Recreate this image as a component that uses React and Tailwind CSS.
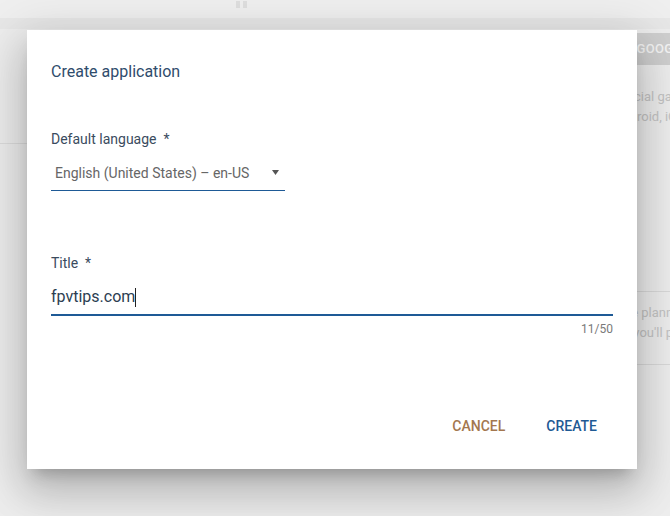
import React from "react";

export default function App() {
  return (
    <div className="relative w-[670px] h-[516px] overflow-hidden bg-[#ededed] font-['Roboto',sans-serif]">
      {/* dimmed page behind */}
      <div className="flex flex-col w-full h-full">
        <div className="h-[18px] bg-[#efefef] flex">
          <div className="ml-[236px] mt-[1px] flex gap-[3px]">
            <div className="w-[4px] h-[7px] bg-[#dedede]" />
            <div className="w-[4px] h-[7px] bg-[#dedede]" />
          </div>
        </div>
        <div className="h-[11px] bg-[#e7e7e7]" />
        <div className="flex flex-1">
          <div className="w-[470px] shrink-0 flex flex-col">
            <div className="h-[114px]" />
            <div className="h-px bg-[#dcdcdc]" />
          </div>
          <div className="w-[200px] shrink-0 flex flex-col">
            <div className="ml-[64px] mt-[4px] h-[32px] w-[220px] shrink-0 bg-[#cfcfcf] flex items-center pl-[14px] whitespace-nowrap text-[13px] font-medium text-[#f4f4f4] tracking-wide">
              SIGN IN WITH GOOGLE
            </div>
            <div className="mt-[22px] text-[13px] leading-[20px] text-[#c3c3c3] pl-[144px] whitespace-nowrap">
              Official games for<br />
              Android, iOS and web
            </div>
            <div className="mt-[164px] h-px bg-[#d9d9d9]" />
            <div className="mt-[11px] text-[13px] leading-[20px] text-[#c3c3c3] pl-[146px] whitespace-nowrap">
              Use planning tools<br />
              so you'll publish
            </div>
            <div className="mt-[21px] h-px bg-[#d9d9d9]" />
          </div>
        </div>
      </div>

      {/* dialog */}
      <div className="absolute left-[27px] top-[30px] w-[610px] h-[439px] bg-white shadow-[0_11px_15px_-7px_rgba(0,0,0,0.22),0_24px_38px_3px_rgba(0,0,0,0.14),0_9px_46px_8px_rgba(0,0,0,0.12)] flex flex-col px-[24px]">
        <div className="mt-[30px] text-[16px] leading-[24px] text-[#2f4c6c]">Create application</div>

        <div className="mt-[45px] text-[14px] leading-[20px] text-[#3a4b5e]">
          Default language&nbsp; *
        </div>
        <div className="mt-[14px] w-[234px] border-b border-[#1e5a96] pb-[7px] pl-[4px] pr-[6px] flex items-center justify-between">
          <span className="text-[14px] leading-[20px] text-[#666666]">English (United States) – en-US</span>
          <svg width="7" height="5" viewBox="0 0 7 5" className="mb-[1px]">
            <path d="M0 0 L7 0 L3.5 5 Z" fill="#555555" />
          </svg>
        </div>

        <div className="mt-[62px] text-[14px] leading-[20px] text-[#3a4b5e]">
          Title&nbsp; *
        </div>
        <div className="mt-[12px] border-b-2 border-[#1e5a96] pb-[5px] flex items-center">
          <span className="text-[16px] leading-[24px] text-[#2c3e52]">fpvtips.com</span>
          <span className="w-px h-[19px] bg-[#222]" />
        </div>
        <div className="mt-[5px] text-right text-[12px] leading-[16px] text-[#7a7a7a]">11/50</div>

        <div className="mt-[71px] flex justify-end gap-[25px] pr-[8px]">
          <button className="h-[36px] px-[8px] text-[14px] font-medium text-[#a3774f]">CANCEL</button>
          <button className="h-[36px] px-[8px] text-[14px] font-medium text-[#1f5a94]">CREATE</button>
        </div>
      </div>
    </div>
  );
}
